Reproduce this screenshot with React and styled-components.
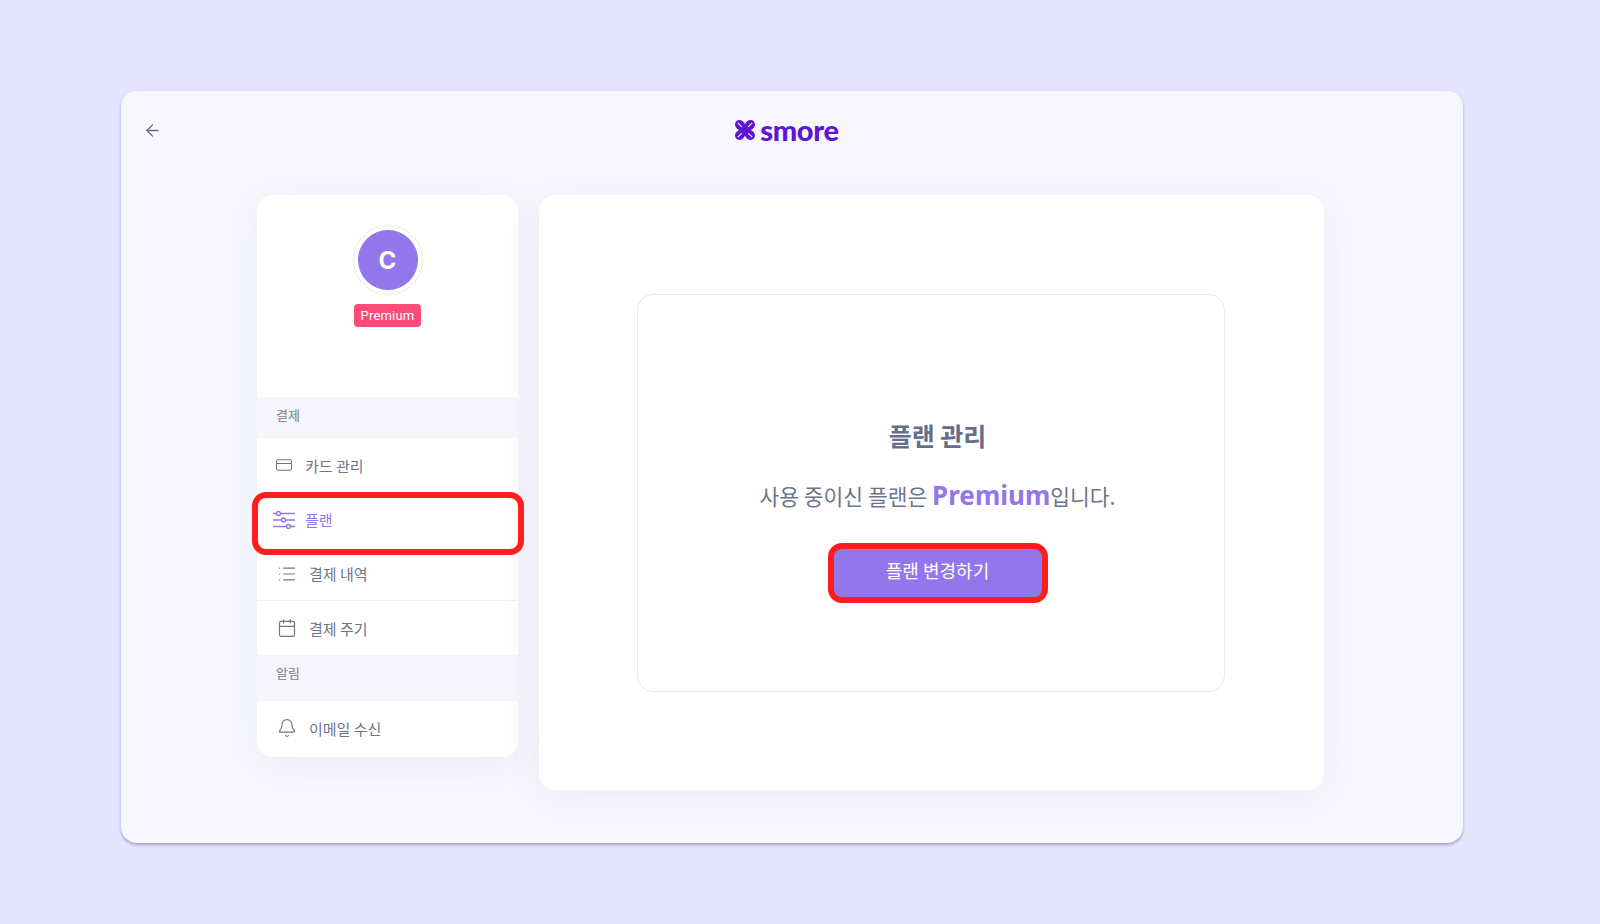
import styled, { createGlobalStyle } from 'styled-components';
import { ArrowLeft, Bell, Calendar, CreditCard, List, SlidersHorizontal } from 'lucide-react';

const GlobalStyle = createGlobalStyle`
  html, body {
    margin: 0;
    padding: 0;
    background: #e4e4ff;
    font-family: "Noto Sans CJK KR", "Noto Sans", sans-serif;
  }
`;

const menu = [
  { type: 'section', label: '결제', height: 41 },
  { label: '카드 관리', icon: CreditCard, wide: true, height: 54 },
  { label: '플랜', icon: Sliders, wide: true, active: true, height: 55 },
  { label: '결제 내역', icon: List, height: 54, border: true },
  { label: '결제 주기', icon: Calendar, height: 54 },
  { type: 'section', label: '알림', height: 46 },
  { label: '이메일 수신', icon: Bell, height: 54 },
];

function Sliders(props) {
  return (
    <svg viewBox="0 0 22 18" fill="none" stroke="currentColor" strokeWidth="1.2" {...props}>
      <path d="M0 2.5h3M8 2.5h14M0 9h8M13 9h9M0 15.5h13M18 15.5h4" />
      <circle cx="5.5" cy="2.5" r="2" />
      <circle cx="10.5" cy="9" r="2" />
      <circle cx="15.5" cy="15.5" r="2" />
    </svg>
  );
}

const Logo = () => (
  <LogoWrap>
    <svg width="22" height="22" viewBox="0 0 22 22">
      <path fill="#5d16d6" d="M11 5.2C9.6 2.4 7.6 1 5.4 1 2.9 1 1 2.9 1 5.4c0 2.2 1.4 4.2 4.2 5.6C2.4 12.4 1 14.4 1 16.6 1 19.100 2.900 21 5.400 21c2.200 0 4.200-1.400 5.600-4.200 1.400 2.800 3.400 4.200 5.600 4.200 2.500 0 4.400-1.900 4.400-4.400 0-2.200-1.400-4.200-4.200-5.600 2.800-1.400 4.200-3.400 4.200-5.600C21 2.900 19.100 1 16.600 1 14.400 1 12.400 2.400 11 5.200z" />
      <path fill="none" stroke="#f7f7fd" strokeWidth="1.1" d="M3.800 3.800l4 4M18.200 3.800l-4 4M3.800 18.200l4-4M18.200 18.200l-4-4" />
    </svg>
    <LogoText>smore</LogoText>
  </LogoWrap>
);

const App = () => {
  return (
    <Page>
      <GlobalStyle />
      <Window>
        <Header>
          <BackButton><ArrowLeft size={19} strokeWidth={1.6} /></BackButton>
          <Logo />
        </Header>
        <Body>
          <Sidebar>
            <Profile>
              <Avatar><span>C</span></Avatar>
              <Badge>Premium</Badge>
            </Profile>
            {menu.map(item => item.type === 'section' ? (
              <SectionLabel key={item.label} $height={item.height}>{item.label}</SectionLabel>
            ) : (
              <MenuItem key={item.label} $height={item.height} $active={item.active} $border={item.border} $wide={item.wide}>
                <item.icon width={item.wide ? 22 : 20} height={item.wide ? 18 : 20} strokeWidth={1.4} />
                {item.label}
              </MenuItem>
            ))}
          </Sidebar>
          <Main>
            <PlanCard>
              <Title>플랜 관리</Title>
              <Description>사용 중이신 플랜은 <strong>Premium</strong>입니다.</Description>
              <ChangeButton>플랜 변경하기</ChangeButton>
            </PlanCard>
          </Main>
        </Body>
      </Window>
    </Page>
  );
}

const Page = styled.div`
  box-sizing: border-box;
  height: 924px;
  padding: 91px 0 0 121px;
  overflow: hidden;
`;

const Window = styled.div`
  box-sizing: border-box;
  width: 1342px;
  height: 752px;
  background: #f7f7fd;
  border-radius: 16px;
  box-shadow: 0 2px 3px rgba(90, 85, 130, 0.45);
`;

const Header = styled.div`
  position: relative;
  height: 104px;
  display: flex;
  align-items: flex-start;
  justify-content: center;
  padding-top: 27px;
  box-sizing: border-box;
`;

const BackButton = styled.div`
  position: absolute;
  left: 22px;
  top: 30px;
  display: flex;
  color: #64708a;
`;

const LogoWrap = styled.div`
  display: flex;
  align-items: center;
  gap: 4px;
  height: 24px;
  margin-left: -11px;
`;

const LogoText = styled.span`
  font-family: "Lato", sans-serif;
  font-size: 29px;
  line-height: 24px;
  font-weight: 900;
  color: #5d16d6;
  letter-spacing: -0.3px;
`;

const Body = styled.div`
  display: flex;
  align-items: flex-start;
  gap: 21px;
  padding-left: 136px;
`;

const Sidebar = styled.div`
  width: 261px;
  height: 562px;
  background: #fff;
  border-radius: 16px;
  box-shadow: 0 6px 40px rgba(100, 100, 160, 0.07);
`;

const Profile = styled.div`
  height: 202px;
  box-sizing: border-box;
  padding-top: 30px;
  display: flex;
  flex-direction: column;
  align-items: center;
`;

const Avatar = styled.div`
  box-sizing: border-box;
  width: 70px;
  height: 70px;
  padding: 4px;
  border: 1px solid #e9e9ee;
  border-radius: 50%;

  span {
    display: flex;
    align-items: center;
    justify-content: center;
    height: 100%;
    border-radius: 50%;
    background: #9476ec;
    color: #fff;
    font-family: "Inter", sans-serif;
    font-size: 24px;
    font-weight: 700;
  }
`;

const Badge = styled.div`
  margin-top: 9px;
  width: 67px;
  height: 23px;
  border-radius: 4px;
  background: #fb4c78;
  color: #fff;
  font-family: "Roboto", sans-serif;
  font-size: 13px;
  line-height: 23px;
  text-align: center;
  letter-spacing: 0.2px;
`;

const SectionLabel = styled.div`
  box-sizing: border-box;
  height: ${props => props.$height}px;
  padding: 8px 0 0 19px;
  background: #f6f5fb;
  color: #8c929e;
  font-size: 13px;
  font-weight: 500;
  line-height: 20px;
`;

const MenuItem = styled.div`
  position: relative;
  box-sizing: border-box;
  height: ${props => props.$height}px;
  display: flex;
  align-items: center;
  gap: ${props => props.$wide ? '10px' : '12px'};
  padding-left: ${props => props.$wide ? '16px' : '20px'};
  font-size: 15px;
  color: ${props => props.$active ? '#9476ec' : '#6b768c'};
  border-bottom: ${props => props.$border ? '1px solid #f0f0f4' : 'none'};

  ${props => props.$active && `
    &::after {
      content: '';
      position: absolute;
      left: -5px;
      right: -6px;
      top: 0;
      height: 63px;
      box-sizing: border-box;
      border: 6px solid #ff1d1d;
      border-radius: 14px;
    }
  `}
`;

const Main = styled.div`
  box-sizing: border-box;
  width: 785px;
  height: 595px;
  padding: 99px 0 0 98px;
  background: #fff;
  border-radius: 16px;
  box-shadow: 0 6px 40px rgba(100, 100, 160, 0.07);
`;

const PlanCard = styled.div`
  box-sizing: border-box;
  width: 588px;
  height: 398px;
  padding-top: 122px;
  display: flex;
  flex-direction: column;
  align-items: center;
  border: 1px solid #e9e9ee;
  border-radius: 16px;
`;

const Title = styled.h2`
  margin: 0 0 0 13px;
  font-size: 25px;
  line-height: 36px;
  font-weight: 700;
  color: #64708a;
`;

const Description = styled.p`
  margin: 24px 0 0 13px;
  font-size: 21.5px;
  line-height: 36px;
  color: #6b768c;

  strong {
    font-size: 26px;
    font-weight: 700;
    color: #9476ec;
    font-family: "Noto Sans", sans-serif;
  }
`;

const ChangeButton = styled.button`
  margin: 29px 0 0 13px;
  box-sizing: border-box;
  width: 220px;
  height: 60px;
  padding: 0 0 6px;
  background: #9476ec;
  border: 6px solid #ff1d1d;
  border-radius: 14px;
  color: #fff;
  font-family: inherit;
  font-size: 18px;
`;

export default App;
